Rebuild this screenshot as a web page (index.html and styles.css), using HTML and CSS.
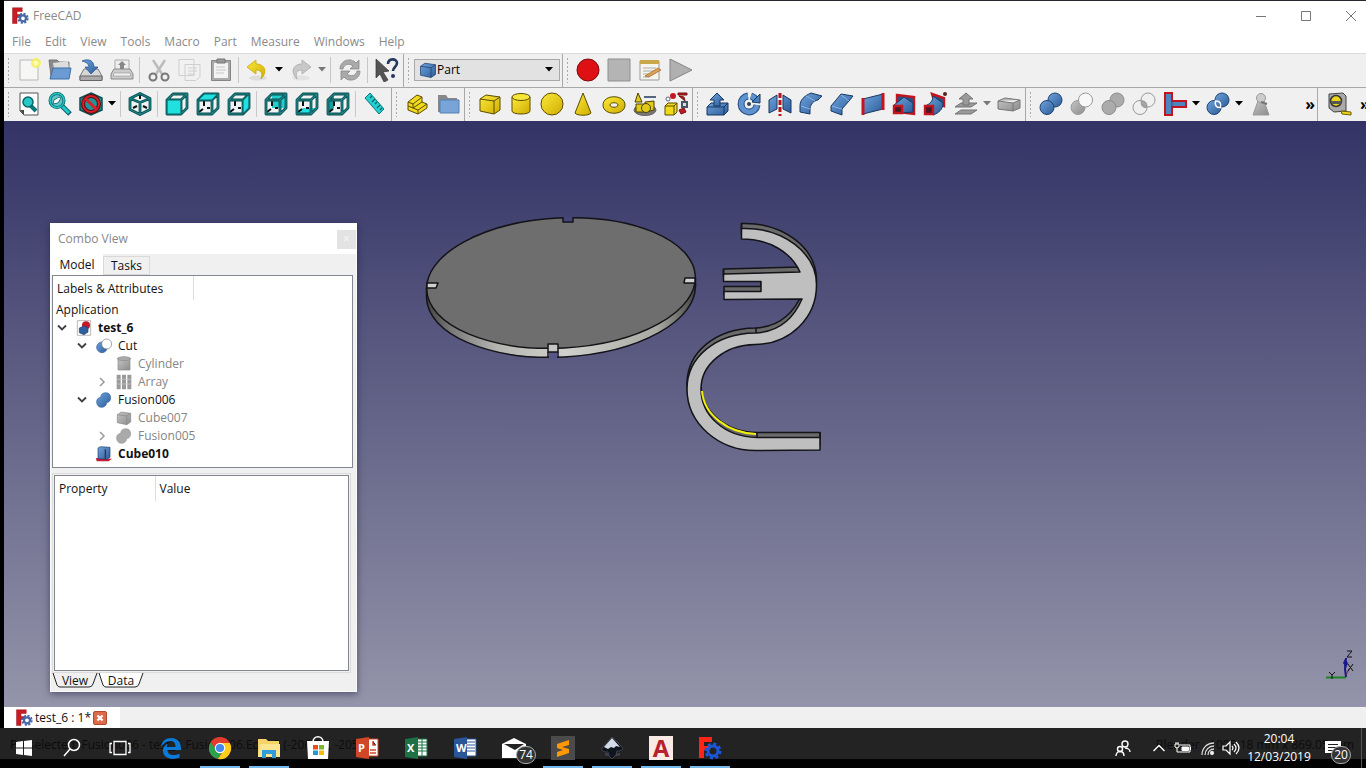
FILE: index.html
```
<!DOCTYPE html>
<html lang="en">
<head>
	<meta charset="UTF-8">
	<title>FreeCAD</title>
	<link rel="stylesheet" href="styles.css">
</head>
<body>
	<!-- shared gradients and shapes -->
	<svg class="defs" width="0" height="0">
		<defs>
			<linearGradient id="blue" x1="0" y1="0" x2="1" y2="1"><stop offset="0" stop-color="#6ea3dc"/><stop offset="1" stop-color="#2d5c98"/></linearGradient>
			<linearGradient id="grey" x1="0" y1="0" x2="1" y2="1"><stop offset="0" stop-color="#c4c4c4"/><stop offset="1" stop-color="#8c8c8c"/></linearGradient>
			<linearGradient id="yellow" x1="0" y1="0" x2="1" y2="1"><stop offset="0" stop-color="#fbea3c"/><stop offset="1" stop-color="#d0ac00"/></linearGradient>
			<linearGradient id="side"><stop offset="0" stop-color="#444"/><stop offset=".08" stop-color="#777"/><stop offset=".25" stop-color="#b4b4b0"/><stop offset=".5" stop-color="#d0d0cc"/><stop offset=".85" stop-color="#aaaaa4"/><stop offset="1" stop-color="#444"/></linearGradient>
			<symbol id="logo" viewBox="0 0 24 24">
				<path d="M2 1h13v5H8v4h5v4H8v8H2z" fill="#cb1c24" stroke="#8a1016" stroke-width=".6"/>
				<circle cx="16" cy="15" r="6" fill="none" stroke="#4a68a8" stroke-width="3" stroke-dasharray="2.700 2"/>
				<circle cx="16" cy="15" r="4" fill="none" stroke="#4a68a8" stroke-width="3"/>
			</symbol>
			<symbol id="wire" viewBox="0 0 24 24">
				<path d="M8 9v5M3 20l4-3M11 16h3" fill="none" stroke="#111" stroke-width="2"/>
				<path d="M2 8h14v14H2zM2 8l6-6h14l-6 6M22 2v14l-6 6" fill="none" stroke="#0b4c4e" stroke-width="2.800" stroke-linejoin="round"/>
				<path d="M2 8h14v14H2zM2 8l6-6h14l-6 6M22 2v14l-6 6" fill="none" stroke="#1c8486" stroke-width="1.200"/>
			</symbol>
			<symbol id="hull" viewBox="0 0 24 24"><path d="M2 8l6-6h14v14l-6 6H2z" fill="#eef3f3"/></symbol>
			<symbol id="box" viewBox="0 0 24 24">
				<path d="M2 7l6-4 14 2v13l-6 4-14-3z"/>
				<path d="M2 7l14 2v13M16 9l6-4" fill="none"/>
			</symbol>
			<symbol id="balls" viewBox="0 0 24 24">
				<circle cx="16" cy="8" r="7"/><circle cx="8" cy="15.500" r="7"/>
			</symbol>
			<symbol id="drop" viewBox="0 0 8 5"><path d="M0 0h8L4 4.500z"/></symbol>
			<symbol id="open" viewBox="0 0 10 8"><path d="M1 1.500l4 4 4-4" fill="none" stroke="#404040" stroke-width="1.800"/></symbol>
			<symbol id="closed" viewBox="0 0 10 10"><path d="M3 1l4 4-4 4" fill="none" stroke="#9a9a9a" stroke-width="1.500"/></symbol>
			<path id="bracket" d="M741.500 228.500C783 227 816.500 253 816.500 285C816.500 318 790 344 755 344.500C725 345 701 364 701 389C701 415 724 437 757 437.500H820V450L757 450.500C718 451 687 423 687 389C687 357 716 333.500 755 333C777 332 793 320 802 299L724 299.500V291.500H761V281.500H723.500V274L800 272C791 252 769 239 741.500 239Z"/>
		</defs>
	</svg>

	<div class="window">
		<header class="titlebar">
			<svg class="logo"><use href="#logo"/></svg>
			<span class="title">FreeCAD</span>
			<div class="controls">
				<button aria-label="Minimize"><svg viewBox="0 0 12 12"><path d="M1 6.500h10"/></svg></button>
				<button aria-label="Maximize"><svg viewBox="0 0 12 12"><path d="M1.500 1.500h9v9h-9z"/></svg></button>
				<button aria-label="Close"><svg viewBox="0 0 12 12"><path d="M1 1l10 10M11 1L1 11"/></svg></button>
			</div>
		</header>
		<nav class="menubar">
			<button>File</button>
			<button>Edit</button>
			<button>View</button>
			<button>Tools</button>
			<button>Macro</button>
			<button>Part</button>
			<button>Measure</button>
			<button>Windows</button>
			<button>Help</button>
		</nav>

		<div class="toolbar-row">
			<div class="toolbar">
				<i class="grip"></i>
				<button class="tool" aria-label="New"><svg viewBox="0 0 24 24"><path d="M3 2h18v20H3z" fill="#f6f6f4" stroke="#b8b8b4"/><circle cx="19" cy="5" r="5" fill="#f8ef50" opacity=".8"/><circle cx="19" cy="5" r="2.500" fill="#fffbb0"/></svg></button>
				<button class="tool" aria-label="Open"><svg viewBox="0 0 24 24"><path d="M1 2h8l2 2h10v14H3z" fill="#8a8a8a" stroke="#777"/><path d="M5 5l15-2 1 8H6z" fill="#ddd"/><path d="M5 10h18l-2 11H2z" fill="#6b9bd2" stroke="#3e6ea8"/></svg></button>
				<button class="tool" aria-label="Save"><svg viewBox="0 0 24 24"><path d="M5 11h14l4 7v4H1v-4z" fill="#d6d6d6" stroke="#777"/><path d="M1 18h22v4.500H1z" fill="#aaa" stroke="#666"/><path d="M3 3c7-3 12 0 12 6h4l-7 7-6-7h4c0-3-3-5-7-6z" fill="url(#blue)" stroke="#2c5a95" stroke-width=".8"/></svg></button>
				<button class="tool" aria-label="Print"><svg viewBox="0 0 24 24"><path d="M5 12V2h14v10" fill="#eee" stroke="#aaa"/><path d="M12 3l4 4h-2v4h-4V7H8z" fill="#888"/><path d="M4 11h16l3 5v5H1v-5z" fill="#ccc" stroke="#888"/><path d="M4 15h16l1 3H3z" fill="#f2f2f2" stroke="#999" stroke-width=".7"/></svg></button>
				<i class="sep"></i>
				<button class="tool" aria-label="Cut"><svg viewBox="0 0 24 24" fill="none"><path d="M6 2l9 14M18 2L9 16" stroke="#bcbcbc" stroke-width="2.500"/><circle cx="6" cy="19" r="3.500" stroke="#777" stroke-width="2"/><circle cx="18" cy="19" r="3.500" stroke="#777" stroke-width="2"/></svg></button>
				<button class="tool" aria-label="Copy"><svg viewBox="0 0 24 24" fill="#f1f1f1" stroke="#cfcfcf"><path d="M1 1.500h15v16H1zM7 6.500h15v12l-4 4H7z"/><path d="M10 10h9M10 13h9M10 16h7"/></svg></button>
				<button class="tool" aria-label="Paste"><svg viewBox="0 0 24 24"><path d="M2.500 2.500h19v20h-19z" fill="#aaa" stroke="#858585"/><path d="M5 5h14v15H5z" fill="#f3f3f3"/><path d="M8 1h8v4H8z" fill="#999" stroke="#777"/><path d="M7 9h9M7 12h10M7 15h8" stroke="#c8c8c8"/></svg></button>
				<i class="sep"></i>
				<button class="tool" aria-label="Undo"><svg viewBox="0 0 24 24"><ellipse cx="12" cy="20" rx="9" ry="2.500" fill="#ddd"/><path d="M1 9l9-7v4c9 0 12 8 5 15 2-6 0-9-5-9v4z" fill="url(#yellow)" stroke="#c8a800" stroke-width=".8"/></svg></button>
				<button class="drop" aria-label="Undo history"><svg><use href="#drop"/></svg></button>
				<button class="tool" aria-label="Redo"><svg viewBox="0 0 24 24"><ellipse cx="12" cy="20" rx="9" ry="2.500" fill="#e2e2e2"/><path d="M22 9l-9-7v4C4 6 1 14 8 21c-2-6 0-9 5-9v4z" fill="#c8c8c8" stroke="#aaa" stroke-width=".8"/></svg></button>
				<button class="drop off" aria-label="Redo history"><svg><use href="#drop"/></svg></button>
				<i class="sep"></i>
				<button class="tool" aria-label="Refresh"><svg viewBox="0 0 24 24" fill="#aaa" stroke="#888" stroke-width=".8"><path d="M2 11c0-9 11-12 16-6l3-3v9h-9l3-3C11 5 6 6 5 11z"/><path d="M22 13c0 9-11 12-16 6l-3 3v-9h9l-3 3c4 3 9 2 10-3z"/></svg></button>
				<i class="sep"></i>
				<button class="tool" aria-label="What's this"><svg viewBox="0 0 24 24"><path d="M1 1l13 12-6 1 5 8-4 2-4-8-4 4z" fill="#555" stroke="#333" stroke-width=".7"/><path d="M13 6c0-6 9-6 9-1 0 4-4 4-4 8" fill="none" stroke="#24375f" stroke-width="2.600"/><circle cx="18" cy="18" r="2" fill="#24375f"/></svg></button>
			</div>
			<div class="toolbar">
				<i class="grip"></i>
				<div class="workbench">
					<svg viewBox="0 0 24 24" fill="url(#blue)" stroke="#20426f"><use href="#box"/></svg>
					<select aria-label="Workbench"><option>Part</option></select>
					<svg class="caret"><use href="#drop"/></svg>
				</div>
			</div>
			<div class="toolbar last">
				<i class="grip"></i>
				<button class="tool" aria-label="Record macro"><svg viewBox="0 0 24 24"><circle cx="12" cy="12" r="11" fill="#dd1014" stroke="#7c0a0c"/></svg></button>
				<button class="tool" aria-label="Stop macro"><svg viewBox="0 0 24 24"><path d="M1 1h22v22H1z" fill="#b4b4b4" stroke="#8e8e8e"/></svg></button>
				<button class="tool" aria-label="Macros"><svg viewBox="0 0 24 24"><path d="M2 3h19v19H2z" fill="#f5f5ee" stroke="#999"/><path d="M2 2h19v4H2z" fill="#c9a84a"/><path d="M5 10h13M5 13h13M5 16h8M5 19h6" stroke="#aaa"/><path d="M7 18l13-8 3 2-12 7z" fill="#e0a050" stroke="#8c5a1c" stroke-width=".6"/></svg></button>
				<button class="tool" aria-label="Run macro"><svg viewBox="0 0 24 24"><path d="M1 1l22 11L1 23z" fill="#b0b0b0" stroke="#858585"/></svg></button>
			</div>
		</div>

		<div class="toolbar-row">
			<div class="toolbar">
				<i class="grip"></i>
				<button class="tool" aria-label="Fit all"><svg viewBox="0 0 24 24"><path d="M3 1h18v22H7l-4-4z" fill="#fdfdfd" stroke="#555"/><path d="M3 18h4v5z" fill="#444"/><path d="M13 13l6 6" stroke="#0b7679" stroke-width="4"/><circle cx="11" cy="10" r="5" fill="#29c8c8" stroke="#0b6466" stroke-width="1.500"/></svg></button>
				<button class="tool" aria-label="Fit selection"><svg viewBox="0 0 24 24"><path d="M13 13l9 9" stroke="#0b6466" stroke-width="5"/><path d="M14 14l7 7" stroke="#1fc9cb" stroke-width="3"/><circle cx="9" cy="8.500" r="7" fill="#5fc4c6" stroke="#0b6466" stroke-width="3"/><circle cx="9" cy="8.500" r="7" fill="none" stroke="#1fc9cb" stroke-width="1.500"/><path d="M5 12l1-4 5-3 2 1-3 5z" fill="#fff" stroke="#17797b"/></svg></button>
				<button class="tool" aria-label="Draw style"><svg viewBox="0 0 24 24"><path d="M12 1l11 5v12l-11 5-11-5V6z" fill="#1f9598" stroke="#0b4c4e" stroke-width="1.500"/><circle cx="12" cy="12" r="8" fill="none" stroke="#5a0c10" stroke-width="4"/><circle cx="12" cy="12" r="8" fill="none" stroke="#d81f2a" stroke-width="2"/><path d="M6.500 6.500l11 11" stroke="#d81f2a" stroke-width="3"/></svg></button>
				<button class="drop" aria-label="Draw styles"><svg><use href="#drop"/></svg></button>
				<i class="sep"></i>
				<button class="tool" aria-label="Isometric"><svg viewBox="0 0 24 24" stroke-linejoin="round"><path d="M12 1.500l10 5v11l-10 5-10-5v-11z" fill="#eef3f3"/><path d="M12 3v4M5 16l4-2M19 16l-4-2" stroke="#111" stroke-width="2"/><path d="M12 1.500l10 5v11l-10 5-10-5v-11zM2 6.500l10 4 10-4M12 10.500v12" fill="none" stroke="#0b4c4e" stroke-width="2.800"/><path d="M12 1.500l10 5v11l-10 5-10-5v-11zM2 6.500l10 4 10-4M12 10.500v12" fill="none" stroke="#1c8486" stroke-width="1.200"/></svg></button>
				<i class="sep"></i>
				<button class="tool" aria-label="Front"><svg viewBox="0 0 24 24"><use href="#hull"/><use href="#wire"/><path d="M2 8h14v14H2z" fill="#22dfe0" stroke="#0b6466" stroke-width="1.200"/></svg></button>
				<button class="tool" aria-label="Top"><svg viewBox="0 0 24 24"><use href="#hull"/><use href="#wire"/><path d="M2 8l6-6h14l-6 6z" fill="#22dfe0" stroke="#0b6466" stroke-width="1.200"/></svg></button>
				<button class="tool" aria-label="Right"><svg viewBox="0 0 24 24"><use href="#hull"/><use href="#wire"/><path d="M16 8l6-6v14l-6 6z" fill="#22dfe0" stroke="#0b6466" stroke-width="1.200"/></svg></button>
				<i class="sep"></i>
				<button class="tool" aria-label="Rear"><svg viewBox="0 0 24 24"><use href="#hull"/><path d="M8 2h14v14H8z" fill="#22cfd0"/><use href="#wire"/></svg></button>
				<button class="tool" aria-label="Bottom"><svg viewBox="0 0 24 24"><use href="#hull"/><path d="M2 22l6-6h14l-6 6z" fill="#22dfe0"/><use href="#wire"/></svg></button>
				<button class="tool" aria-label="Left"><svg viewBox="0 0 24 24"><use href="#hull"/><path d="M2 8l6-6v14l-6 6z" fill="#159fa2"/><use href="#wire"/></svg></button>
				<i class="sep"></i>
				<button class="tool" aria-label="Measure distance"><svg viewBox="0 0 24 24"><path d="M7 1l14 16-5 5L2 6z" fill="#25cfd0" stroke="#0b7679"/><path d="M9 4L7 6M12 7l-3 3M14 10l-2 2M17 13l-3 3M19 16l-2 2" stroke="#0b6466" stroke-width="1.200"/></svg></button>
			</div>
			<div class="toolbar">
				<i class="grip"></i>
				<button class="tool" aria-label="Create part"><svg viewBox="0 0 24 24" fill="#f0d91e" stroke="#5a4d00" stroke-linejoin="round"><path d="M3 10l9-7 5 2v5l5 2v4l-9 6-10-4z"/><path d="M3 10l5 2 9-7M8 12v4l5 2 9-6M8 16l9-6M13 18v4M3 14l5 2" fill="none"/></svg></button>
				<button class="tool" aria-label="Create group"><svg viewBox="0 0 24 24"><path d="M2 3h8l2 3h9v14H2z" fill="#888"/><path d="M4 8h19v13H4z" fill="#78a4d8" stroke="#5580b4"/></svg></button>
			</div>
			<div class="toolbar">
				<i class="grip"></i>
				<button class="tool" aria-label="Cube"><svg viewBox="0 0 24 24" fill="url(#yellow)" stroke="#5a4d00"><use href="#box"/></svg></button>
				<button class="tool" aria-label="Cylinder"><svg viewBox="0 0 24 24" fill="url(#yellow)" stroke="#5a4d00"><path d="M3 5v14c0 4 18 4 18 0V5"/><ellipse cx="12" cy="5" rx="9" ry="3.500" fill="#f7e53a"/></svg></button>
				<button class="tool" aria-label="Sphere"><svg viewBox="0 0 24 24" fill="url(#yellow)" stroke="#5a4d00"><circle cx="12" cy="12" r="11"/></svg></button>
				<button class="tool" aria-label="Cone"><svg viewBox="0 0 24 24" fill="url(#yellow)" stroke="#5a4d00"><path d="M12 1l8 20c-2 3-14 3-16 0z"/></svg></button>
				<button class="tool" aria-label="Torus"><svg viewBox="0 0 24 24" fill="url(#yellow)" stroke="#5a4d00" fill-rule="evenodd"><path d="M1 13c0-11 22-11 22 0s-22 11-22 0zM8 13c0 3 8 3 8 0s-8-3-8 0z"/></svg></button>
				<button class="tool" aria-label="Primitives"><svg viewBox="0 0 24 24" fill="#e0ca1c" stroke="#4d4200"><ellipse cx="12" cy="18" rx="11" ry="5.500" fill="#777" stroke="#666"/><path d="M5 1l4 9H2z"/><path d="M11 5h12" stroke="#52677e" stroke-width="2"/><path d="M3 12h9v8H3zM12 10l9-1v9l-8 2z"/><circle cx="13" cy="16" r="4.500"/></svg></button>
				<button class="tool" aria-label="Shape builder"><svg viewBox="0 0 24 24"><path d="M1 14l3-3h9v9l-3 3H1zM1 14h9v9M10 14l3-3" fill="#f1d91c" stroke="#5a4d00"/><circle cx="4" cy="7" r="2" fill="#fff" stroke="#567"/><circle cx="9" cy="4" r="3" fill="#c21824"/><path d="M14 1h9v2h-9zM15 4l5 1 1 4zM15 18l5-2 2 4-5 2z" fill="#c21824" stroke="#711"/><path d="M18 10h5v5h-5z" fill="#ddd" stroke="#456" stroke-width="2"/></svg></button>
			</div>
			<div class="toolbar">
				<i class="grip"></i>
				<button class="tool" aria-label="Extrude"><svg viewBox="0 0 24 24" fill="url(#blue)" stroke="#173963"><path d="M1 15l4-4h17v8l-4 4H1zM1 15h17v8M18 15l4-4"/><path d="M11 1l7 7h-4v6H8V8H4z"/></svg></button>
				<button class="tool" aria-label="Revolve"><svg viewBox="0 0 24 24" fill="none"><path d="M11 4a8 8 0 1 0 9 9M19 8a9 9 0 0 0-5-4" stroke="#234c82" stroke-width="7"/><path d="M11 4a8 8 0 1 0 9 9M19 8a9 9 0 0 0-5-4" stroke="#5f93cf" stroke-width="5"/><path d="M15 10l8 1V2z" fill="#4a7fbd" stroke="#173963"/><circle cx="12" cy="12" r="2" fill="#345"/></svg></button>
				<button class="tool" aria-label="Mirror"><svg viewBox="0 0 24 24" fill="url(#blue)" stroke="#173963"><path d="M1 8l8-5v14l-8 4zM23 8l-8-5v14l8 4z"/><path d="M12 1v23" stroke="#b8121a" stroke-width="3" stroke-dasharray="5 2"/></svg></button>
				<button class="tool" aria-label="Fillet"><svg viewBox="0 0 24 24" fill="url(#blue)" stroke="#173963"><path d="M1 20v-6C1 8 5 4 12 1l11 3-4 4c-5 1-7 4-8 8v6z"/><path d="M2 14l9 3M7 4l9 5" fill="none" stroke="#8ab5e6"/></svg></button>
				<button class="tool" aria-label="Chamfer"><svg viewBox="0 0 24 24" fill="url(#blue)" stroke="#173963"><path d="M1 19v-5L11 2l12 2-4 5-7 8v6z"/><path d="M2 14l10 3M11 3l8 6" fill="none" stroke="#8ab5e6"/></svg></button>
				<button class="tool" aria-label="Ruled surface"><svg viewBox="0 0 24 24"><path d="M2 7l20-5v15L2 22z" fill="url(#blue)" stroke="#173963"/><path d="M2 6v17M22 1v17" stroke="#c4141e" stroke-width="3"/></svg></button>
				<button class="tool" aria-label="Loft"><svg viewBox="0 0 24 24"><path d="M5 3l17 2v17l-17-2z" fill="#27508a" stroke="#c4141e" stroke-width="2.400"/><path d="M2 13l10-8 9 6v9l-11 1H2z" fill="url(#blue)" stroke="#173963"/><path d="M2 14h8v7H2z" fill="#4a1626" stroke="#c4141e" stroke-width="2.400"/></svg></button>
				<button class="tool" aria-label="Sweep"><svg viewBox="0 0 24 24"><path d="M9 2l12 4v8l-9-3z" fill="#27508a" stroke="#c4141e" stroke-width="2.400"/><path d="M2 14c5-2 8-5 8-10l10 7c0 6-4 10-10 12z" fill="url(#blue)" stroke="#173963"/><path d="M2 14h8v8H2z" fill="#4a1626" stroke="#c4141e" stroke-width="2.400"/><circle cx="22" cy="2" r="2" fill="#522"/></svg></button>
				<button class="tool" aria-label="Offset"><svg viewBox="0 0 24 24" fill="#9a9a9a" stroke="#747474"><path d="M1 22l6-4h16l-6 4zM1 15l6-4h16l-6 4z"/><path d="M12 1l7 6h-4v6H9V7H5z"/></svg></button>
				<button class="drop off" aria-label="Offset tools"><svg><use href="#drop"/></svg></button>
				<button class="tool" aria-label="Thickness"><svg viewBox="0 0 24 24" fill="url(#grey)" stroke="#777"><path d="M1 9l7-3 15 2v8l-7 3-15-2zM1 9l15 2 7-3M16 11v8"/></svg></button>
			</div>
			<div class="toolbar grow">
				<i class="grip"></i>
				<button class="tool" aria-label="Boolean"><svg viewBox="0 0 24 24" fill="url(#blue)" stroke="#1d4373"><use href="#balls"/></svg></button>
				<button class="tool" aria-label="Cut"><svg viewBox="0 0 24 24" stroke="#999"><circle cx="8" cy="15.500" r="7" fill="url(#grey)"/><circle cx="15.500" cy="8" r="7" fill="#f8f8f8"/></svg></button>
				<button class="tool" aria-label="Union"><svg viewBox="0 0 24 24" fill="#ababab" stroke="#8d8d8d"><use href="#balls"/></svg></button>
				<button class="tool" aria-label="Intersection"><svg viewBox="0 0 24 24" fill="none" stroke="#999"><path d="M9.500 9c-1 4 1 7 5 6.500 1-4-1-7-5-6.500z" fill="#aaa"/><use href="#balls"/></svg></button>
				<button class="tool" aria-label="Join"><svg viewBox="0 0 24 24"><path d="M2 1h7v8h14v6H9v8H2z" fill="#4e84c0" stroke="#c4141e" stroke-width="2"/><path d="M9 9v6" stroke="#274e80"/></svg></button>
				<button class="drop" aria-label="Join tools"><svg><use href="#drop"/></svg></button>
				<button class="tool" aria-label="Split"><svg viewBox="0 0 24 24" fill="url(#blue)" stroke="#1d4373"><use href="#balls"/><path d="M9.500 9c-1 4 1 7 5 6.500 1-4-1-7-5-6.500z" stroke="#fff" stroke-width="1.500"/></svg></button>
				<button class="drop" aria-label="Split tools"><svg><use href="#drop"/></svg></button>
				<button class="tool" aria-label="Check geometry"><svg viewBox="0 0 24 24" fill="url(#grey)" stroke="#999"><path d="M9 9h6l5 14H4z"/><circle cx="12" cy="6" r="4.500" fill="#ccc"/><path d="M12 10l6 2" stroke="#777" stroke-width="2"/></svg></button>
				<button class="more">»</button>
			</div>
			<div class="toolbar edge">
				<i class="grip"></i>
				<button class="tool" aria-label="Measure"><svg viewBox="0 0 24 24"><path d="M1 2l14-1 3 3v15l-12 1-5-4z" fill="#aaa" stroke="#444"/><circle cx="8" cy="9" r="5.500" fill="#ecd51c" stroke="#333" stroke-width="1.500"/><path d="M2.500 9h11v3h-9z" fill="#555"/><path d="M13 19l10 1v3l-9-1z" fill="#ecd51c" stroke="#6a5c00"/></svg></button>
				<button class="more">»</button>
			</div>
		</div>

		<main class="viewport">
			<svg class="scene" viewBox="4 121 1362 586" preserveAspectRatio="xMidYMin meet">
				<g stroke="#131318" stroke-width="1.500" stroke-linejoin="round">
					<!-- plate -->
					<ellipse cx="561" cy="292" rx="134.500" ry="65" fill="url(#side)" transform="rotate(-3 561 292)"/>
					<ellipse cx="561" cy="283" rx="134.500" ry="65" fill="#6e6e6e" transform="rotate(-3 561 283)"/>
					<path d="M426.500 288v9M695.500 278v9"/>
					<path d="M563 217v5h10v-5" fill="#46457a"/>
					<path d="M427 283h11l-2 5h-9zM685 278h10v5h-11z" fill="#d0d0d0"/>
					<path d="M549 352h8v7h-8z" fill="#57568a" stroke="none"/>
					<path d="M548 344h10v8h-10z" fill="#c4c4c2"/>
					<path d="M548 352v5M558 352v5"/>
					<!-- bracket: extruded body, then its front face -->
					<use href="#bracket" y="-5" fill="#6a6a6a"/>
					<use href="#bracket" fill="#bfbfbf"/>
					<path d="M741.500 223v6M723.500 269v6M820 432v6M756 328v5M757 433v5"/>
					<path d="M702 391C704 415 728 433 756 434" fill="none" stroke="#f3f00c" stroke-width="2"/>
				</g>
			</svg>
			<svg class="axes" viewBox="0 0 32 34" fill="none">
				<path d="M1 28.500h20" stroke="#1c8420" stroke-width="2"/><path d="M21 28l-1-8 1-11" stroke="#18188c" stroke-width="2"/><path d="M18 14l2-4 3 4-2 5z" fill="#18188c"/><path d="M21 26l3-6" stroke="#6c1860"/>
				<path d="M22 2h5l-5 6h5M23 15l5 7M28 15l-5 7M4 23l3 3 3-3M7 26v4" stroke="#111"/>
			</svg>

			<section class="combo">
				<header class="combo-title"><span>Combo View</span><button aria-label="Close panel">×</button></header>
				<div class="tabs"><button class="active">Model</button><button>Tasks</button></div>
				<div class="tree">
					<div class="columns"><span>Labels &amp; Attributes</span></div>
					<p>Application</p>
					<ul>
						<li class="strong"><button aria-label="Collapse"><svg><use href="#open"/></svg></button>
							<svg viewBox="0 0 24 24"><path d="M2 1h20v22H2z" fill="#fff" stroke="#999"/><circle cx="15" cy="8" r="6" fill="#c81824"/><path d="M5 12l7-3 6 2v7l-6 4-7-3z" fill="#2f5f9e" stroke="#1c3f6e"/></svg>test_6
						</li>
						<li class="l2"><button aria-label="Collapse"><svg><use href="#open"/></svg></button>
							<svg viewBox="0 0 24 24"><circle cx="9" cy="14" r="8" fill="url(#blue)" stroke="#2d5c98"/><circle cx="16" cy="9" r="7.500" fill="#fff" stroke="#777"/></svg>Cut
						</li>
						<li class="l3 dim"><i></i>
							<svg viewBox="0 0 24 24" fill="url(#grey)" stroke="#888"><path d="M3 4v17h18V4"/><ellipse cx="12" cy="4" rx="10" ry="3" fill="#aaa"/></svg>Cylinder
						</li>
						<li class="l3 dim"><button aria-label="Expand"><svg><use href="#closed"/></svg></button>
							<svg viewBox="0 0 24 24" fill="#9a9a9a"><path d="M1 1h6v22H1zM9 1h6v22H9zM17 1h6v22h-6z"/><path d="M1 8h22M1 15h22" stroke="#ccc"/></svg>Array
						</li>
						<li class="l2"><button aria-label="Collapse"><svg><use href="#open"/></svg></button>
							<svg viewBox="0 0 24 24"><path d="M1 15a7 7 0 0 1 6-7 7.500 7.500 0 1 1 9 8A7.500 7.500 0 0 1 1 15z" fill="url(#blue)" stroke="#3566a3"/></svg>Fusion006
						</li>
						<li class="l3 dim"><i></i>
							<svg viewBox="0 0 24 24" fill="url(#grey)" stroke="#888"><use href="#box"/></svg>Cube007
						</li>
						<li class="l3 dim"><button aria-label="Expand"><svg><use href="#closed"/></svg></button>
							<svg viewBox="0 0 24 24"><path d="M1 15a7 7 0 0 1 6-7 7.500 7.500 0 1 1 9 8A7.500 7.500 0 0 1 1 15z" fill="#aaa" stroke="#999"/></svg>Fusion005
						</li>
						<li class="l2 strong"><i></i>
							<svg viewBox="0 0 24 24"><path d="M0 18l24 1-5 4H1z" fill="#c81834"/><path d="M3 3l4-2 14 1v15l-5 3-13-1z" fill="url(#blue)" stroke="#1d3c68"/><path d="M14 5v15" stroke="#4c2858" stroke-width="2"/></svg>Cube010
						</li>
					</ul>
				</div>
				<div class="props">
					<table><thead><tr><th>Property</th><th>Value</th></tr></thead></table>
				</div>
				<div class="foot">
					<button><svg viewBox="0 0 46 15" fill="#f0f0f0" stroke="#222"><path d="M1 0l4 12q1 2 3 2h29q3 0 4-3l4-11"/></svg><span>View</span></button>
					<button><svg viewBox="0 0 46 15" fill="#fff" stroke="#222"><path d="M1 0l4 12q1 2 3 2h29q3 0 4-3l4-11"/></svg><span>Data</span></button>
				</div>
			</section>
		</main>

		<div class="doctabs">
			<div class="doctab">
				<svg class="logo"><use href="#logo"/></svg>
				<span>test_6 : 1*</span>
				<button aria-label="Close document"><svg viewBox="0 0 14 14"><path d="M4 4l6 6M10 4l-6 6" stroke="#fff" stroke-width="2.500"/></svg></button>
			</div>
		</div>
	</div>

	<footer class="taskbar">
		<div class="status"><span>Preselected: Fusion006 - test_6.Fusion006.Edge5 (-206.00, -205</span><span>Blender &nbsp; 1005.18 mm x 869.05 mm</span></div>
		<div class="apps">
			<button aria-label="Start"><svg viewBox="0 0 24 24" fill="#fff"><path d="M4 6l7-1v6.500H4zM12 5l8-1v7.500h-8zM4 12.500h7V19l-7-1zM12 12.500h8V20l-8-1z"/></svg></button>
			<button aria-label="Search"><svg viewBox="0 0 24 24" fill="none" stroke="#fff" stroke-width="1.500"><circle cx="14" cy="9" r="5.500"/><path d="M10 13l-6 7"/></svg></button>
			<button aria-label="Task view"><svg viewBox="0 0 24 24" fill="none" stroke="#fff" stroke-width="1.300"><path d="M6 5.500h12v13H6zM4 7.500H2v9h2M20 7.500h2v9h-2"/></svg></button>
			<button class="first" aria-label="Edge"><svg viewBox="0 0 24 24"><path d="M2 11C3-1 22-1 22 12v2H8.500c0 6 8 6 12 3.500v4C12 25 3 22 4 13c1-3 3-5 5-5-1 1-1 2-1 3h8.500C17 3 7 3 2 11z" fill="#0b7ad8"/></svg></button>
			<button class="on" aria-label="Chrome"><svg viewBox="0 0 24 24"><circle cx="12" cy="12" r="11" fill="#e33b2e"/><path d="M2.500 6.500A11 11 0 0 0 10 23l5-9-3-2-3 2z" fill="#2ba24c"/><path d="M12 7h9.800A11 11 0 0 1 10 23l6-9z" fill="#fccd1b"/><circle cx="12" cy="12" r="5.200" fill="#fff"/><circle cx="12" cy="12" r="4.100" fill="#4688f1"/></svg></button>
			<button class="on" aria-label="Explorer"><svg viewBox="0 0 24 24"><path d="M1 3h8l2 2h11v16H1z" fill="#f6d366"/><path d="M3 8h20v13H1z" fill="#fce58f"/><path d="M5 22v-8h14v8h-4v-4H9v4z" fill="#2f9ddc"/></svg></button>
			<button aria-label="Store"><svg viewBox="0 0 24 24"><path d="M7 6C7-1 17-1 17 6" fill="none" stroke="#fff" stroke-width="1.500"/><path d="M1 5h22l-1 18H2z" fill="#fff"/><path d="M7 9h5v4.500H7z" fill="#e84e1b"/><path d="M13 9h5v4.500h-5z" fill="#7db72f"/><path d="M7 14.500h5V19H7z" fill="#1f9ad8"/><path d="M13 14.500h5V19h-5z" fill="#fbb910"/></svg></button>
			<button class="office" aria-label="PowerPoint"><svg viewBox="0 0 24 24"><path d="M13 3h10v17H13z" fill="#fff" stroke="#d04727"/><path d="M15 14h6M15 17h6M18 5v4h3" stroke="#d04727" stroke-width="1.500"/><path d="M1 3l13-2v22L1 21z" fill="#d04727"/></svg><b>P</b></button>
			<button class="office" aria-label="Excel"><svg viewBox="0 0 24 24"><path d="M13 3h10v17H13z" fill="#fff" stroke="#1e7145"/><path d="M14 6h9M14 9h9M14 12h9M14 15h9M18 3v17" stroke="#1e7145"/><path d="M1 3l13-2v22L1 21z" fill="#1e7145"/></svg><b>X</b></button>
			<button class="office" aria-label="Word"><svg viewBox="0 0 24 24"><path d="M13 3h10v17H13z" fill="#fff" stroke="#2a5699"/><path d="M14 6h8M14 9h8M14 12h8M14 15h8" stroke="#2a5699"/><path d="M1 3l13-2v22L1 21z" fill="#2a5699"/></svg><b>W</b></button>
			<button aria-label="Mail"><svg viewBox="0 0 24 24"><path d="M0 8l12-6 12 6v14H0z" fill="#fff"/><path d="M2 8h20l-9 6z" fill="#222"/></svg><em class="badge">74</em></button>
			<button class="on" aria-label="Sublime Text"><svg viewBox="0 0 24 24"><path d="M0 0h24v24H0z" fill="#4b4b4b"/><path d="M6 8l12-4v5l-7 2 7 2v4L6 21v-5l6-2-6-2z" fill="#ff9800"/></svg></button>
			<button class="on" aria-label="Inkscape"><svg viewBox="0 0 24 24"><path d="M12 1l10 10c2 3-1 4-5 4l-1 4-4 4-3-3-1-4c-4 0-7-1-6-4z" fill="#10141c" stroke="#3c4454"/><path d="M12 2l8 9-4-1-2 2-3-1-3 2-4-2z" fill="#d4dbe8"/><path d="M5 18l4 1M16 19l4-1" stroke="#445" stroke-width="2"/></svg></button>
			<button class="on acad" aria-label="AutoCAD"><b>A</b></button>
			<button class="on" aria-label="FreeCAD"><svg viewBox="0 0 24 24"><path d="M1 1h13v5H6v4h6v4H6v8H1z" fill="#ff2418"/><circle cx="15" cy="15" r="7" fill="none" stroke="#1c56d8" stroke-width="3" stroke-dasharray="3 2.500"/><circle cx="15" cy="15" r="5" fill="none" stroke="#1c56d8" stroke-width="3"/></svg></button>
		</div>
		<div class="tray">
			<button class="people" aria-label="People"><svg viewBox="0 0 18 18" fill="none" stroke="#fff" stroke-width="1.400"><circle cx="11" cy="5" r="3"/><path d="M11 9c3 0 5 2 5 4"/><circle cx="6" cy="10" r="2.500"/><path d="M2 17c0-6 8-6 8 0"/></svg></button>
			<button aria-label="Hidden icons"><svg viewBox="0 0 18 18" fill="none" stroke="#fff" stroke-width="1.400"><path d="M3.500 12L9 6.500l5.500 5.500"/></svg></button>
			<button aria-label="Battery"><svg viewBox="0 0 18 18" fill="none" stroke="#fff"><path d="M6 6h10v7H6M16.500 8v3M1 5h4v3q-2 2-4 0zM2 5V3M4 5V3M3 9v4h3"/><path d="M8 8h6.500v3.500H8z" fill="#fff"/></svg></button>
			<button aria-label="Network"><svg viewBox="0 0 18 18" fill="none" stroke="#ddd" stroke-width="1.300"><path d="M4 16C4 9 9 4 16 4M7 16c0-5 4-9 9-9M10 16c0-4 3-6 6-6"/><circle cx="14" cy="14" r="1.500" fill="#fff"/></svg></button>
			<button aria-label="Volume"><svg viewBox="0 0 18 18" fill="none" stroke="#fff" stroke-width="1.200"><path d="M1 7h3l4-4v12l-4-4H1zM10 7q2 2 0 4M12 5q4 4 0 8M14 3q6 6 0 12"/></svg></button>
			<div class="clock"><span>20:04</span><span>12/03/2019</span></div>
			<button class="notify" aria-label="Notifications"><svg viewBox="0 0 18 18"><path d="M1 2h16v12h-4v3l-3-3H1z" fill="#fff"/><path d="M4 5.500h10M4 8.500h10M4 11.500h6" stroke="#222"/></svg><em class="badge">20</em></button>
			<i class="peek"></i>
		</div>
	</footer>
</body>
</html>
```
FILE: styles.css
```
* {
	box-sizing: border-box;
}
body {
	display: flex;
	flex-direction: column;
	height: 100vh;
	margin: 0;
	overflow: hidden;
	background: #000;
	color: #111;
	font: 12px/18px "Open Sans", "Noto Sans", sans-serif;
}
button {
	display: flex;
	align-items: center;
	justify-content: center;
	padding: 0;
	border: 0;
	background: none;
	color: inherit;
	font: inherit;
}
svg {
	display: block;
	flex: none;
}
.defs {
	position: absolute;
}
.window {
	display: flex;
	flex: 1;
	flex-direction: column;
	min-height: 0;
	margin-left: 4px;
	border-top: 1px solid #2a2630;
	background: #fff;
}

/* title and menus */
.titlebar {
	display: flex;
	flex: none;
	align-items: center;
	height: 30px;
	padding-left: 7px;
	color: #8a8a8a;
}
.logo {
	width: 18px;
	height: 18px;
}
.title {
	margin-left: 4px;
}
.controls {
	display: flex;
	margin-right: -7px;
	margin-left: auto;
}
.controls button {
	width: 45px;
	height: 30px;
}
.controls svg {
	width: 12px;
	height: 12px;
	fill: none;
	stroke: #777;
}
.menubar {
	display: flex;
	flex: none;
	gap: 14px;
	height: 22px;
	padding-left: 8px;
	color: #8a8a8a;
}

/* toolbars */
.toolbar-row {
	display: flex;
	flex: none;
	height: 34px;
	border-top: 1px solid #dadada;
	background: #f0f0f0;
}
.toolbar-row + .toolbar-row {
	border-top-color: #a8a8a8;
}
.toolbar {
	display: flex;
	flex: none;
	align-items: center;
	padding: 0 1px 2px 0;
	border-right: 1px solid #a8a8a8;
}
.toolbar.last {
	border: 0;
}
.toolbar.grow {
	flex: 1;
}
.toolbar.edge {
	width: 48px;
	border: 0;
	overflow: hidden;
}
.grip {
	width: 3px;
	height: 26px;
	margin: 0 3px;
	background: radial-gradient(circle, #aaa 1px, transparent 1px) 0 0 / 3px 4px;
}
.tool {
	flex: none;
	width: 31px;
	height: 31px;
}
.tool svg {
	width: 24px;
	height: 24px;
}
.drop {
	width: 12px;
	height: 31px;
}
.drop svg,
.caret {
	width: 8px;
	height: 5px;
}
.drop.off svg {
	fill: #777;
}
.sep {
	width: 1px;
	height: 26px;
	margin: 0 3px 0 2px;
	background: #c8c8c8;
}
.more {
	flex: none;
	margin-left: auto;
	padding: 0 1px;
	color: #000;
	font-size: 16px;
	font-weight: 700;
}
.edge .more {
	margin-left: 4px;
}
.workbench {
	display: flex;
	align-items: center;
	width: 146px;
	height: 22px;
	margin: 0 1px;
	padding: 0 6px 0 4px;
	border: 1px solid #a8a8a8;
	background: #e2e2e2;
}
.workbench svg:first-child {
	width: 18px;
	height: 18px;
}
.workbench select {
	flex: 1;
	padding: 0;
	border: 0;
	appearance: none;
	background: none;
	color: #000;
	font: inherit;
}

/* 3D view */
.viewport {
	position: relative;
	flex: 1;
	min-height: 0;
	background: linear-gradient(#333366, #9494aa);
}
.scene {
	width: 100%;
	height: 100%;
}
.axes {
	position: absolute;
	right: 9px;
	bottom: 24px;
	width: 32px;
	height: 34px;
}

/* floating combo view */
.combo {
	position: absolute;
	top: 102px;
	left: 46px;
	display: flex;
	flex-direction: column;
	width: 307px;
	height: 469px;
	border: 1px solid #fafafa;
	background: #f0f0f0;
	box-shadow: 0 2px 7px rgba(20, 20, 50, .5);
}
.combo-title {
	display: flex;
	align-items: center;
	justify-content: space-between;
	height: 30px;
	padding-left: 7px;
	background: #fff;
	color: #888;
}
.combo-title button {
	width: 19px;
	height: 19px;
	background: #e3e3e3;
	color: #f8f8f8;
}
.tabs {
	display: flex;
	align-items: flex-end;
	height: 21px;
}
.tabs button {
	width: 47px;
	height: 19px;
	border: 1px solid #d9d9d9;
}
.tabs .active {
	width: 52px;
	height: 21px;
	border: 0;
	background: #fff;
}
.tree,
.props {
	border: 1px solid #828790;
	background: #fff;
}
.tree {
	height: 193px;
	margin: 0 3px 0 1px;
}
.columns {
	width: 141px;
	height: 24px;
	padding: 4px;
	border-right: 1px solid #ddd;
}
.tree p {
	margin: 0 3px;
	line-height: 19px;
}
.tree ul {
	margin: 0;
	padding: 0;
	list-style: none;
}
.tree li {
	display: flex;
	align-items: center;
	height: 18px;
	padding-left: 4px;
}
.tree li.l2 {
	padding-left: 24px;
}
.tree li.l3 {
	padding-left: 44px;
}
.tree li > i,
.tree li > button {
	width: 10px;
	margin-right: 9px;
}
.tree li button svg {
	width: 10px;
	height: 10px;
}
.tree li > svg {
	width: 16px;
	height: 16px;
	margin-right: 6px;
}
.strong {
	font-weight: 700;
}
.dim {
	color: #858585;
}
.props {
	flex: 1;
	margin: 7px 7px 0 3px;
	outline: 1px solid #dcdcdc;
	outline-offset: 1px;
}
.props table {
	width: 100%;
	border-collapse: collapse;
}
.props th {
	height: 25px;
	padding: 0 4px;
	font-weight: 400;
	text-align: left;
}
.props th:first-child {
	width: 100px;
	border-right: 1px solid #ddd;
}
.foot {
	display: flex;
	height: 20px;
	padding: 2px 0 0 1px;
}
.foot button {
	position: relative;
	width: 46px;
	height: 15px;
}
.foot svg {
	position: absolute;
	top: 0;
	left: 0;
	width: 46px;
	height: 15px;
}
.foot span {
	position: relative;
}

/* document tabs */
.doctabs {
	display: flex;
	flex: none;
	height: 21px;
	background: #f0f0f0;
}
.doctab {
	display: flex;
	align-items: center;
	width: 116px;
	padding-left: 11px;
	background: #fff;
}
.doctab span {
	margin: 0 2px;
	white-space: nowrap;
}
.doctab button {
	width: 14px;
	height: 14px;
	border: 1px solid #b04a2c;
	border-radius: 2px;
	background: #dd6a48;
}

/* Windows taskbar */
.taskbar {
	position: relative;
	display: flex;
	flex: none;
	justify-content: space-between;
	height: 40px;
	background: linear-gradient(#232323 31px, #020202 31px);
	color: #fff;
}
.status {
	position: absolute;
	top: 8px;
	right: 12px;
	left: 10px;
	display: flex;
	justify-content: space-between;
	color: #0c0c0c;
}
.apps,
.tray {
	position: relative;
	display: flex;
}
.apps button {
	position: relative;
	width: 48px;
	height: 40px;
}
.apps .first {
	margin-left: 3px;
}
.apps .first,
.apps .first ~ button {
	margin-right: 1px;
}
.apps svg {
	width: 24px;
	height: 24px;
}
.apps .on::after {
	position: absolute;
	right: 4px;
	bottom: 0;
	left: 4px;
	height: 2px;
	background: #76b9ed;
	content: "";
}
.office b {
	position: absolute;
	left: 15px;
	font-size: 11px;
}
.acad b {
	width: 24px;
	height: 24px;
	background: #faeae6;
	color: #b8202c;
	font-size: 24px;
	line-height: 24px;
}
.badge {
	position: absolute;
	right: 2px;
	bottom: 4px;
	width: 20px;
	height: 18px;
	border: 1px solid #aaa;
	border-radius: 9px;
	background: #333;
	font-size: 12px;
	font-style: normal;
	line-height: 16px;
	text-align: center;
}
.tray button {
	position: relative;
	width: 24px;
}
.tray .people {
	width: 48px;
}
.tray svg {
	width: 18px;
	height: 18px;
}
.clock {
	display: flex;
	flex-direction: column;
	justify-content: center;
	width: 72px;
	text-align: center;
}
.tray .notify {
	width: 36px;
}
.tray .notify .badge {
	right: 0;
}
.peek {
	width: 5px;
	margin-left: 10px;
	border-left: 1px solid #555;
}
```
